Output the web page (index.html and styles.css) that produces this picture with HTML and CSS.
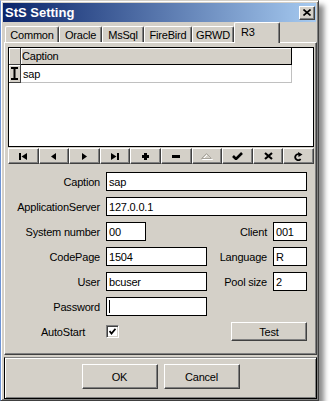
FILE: index.html
```html
<!DOCTYPE html>
<html lang="en">
<head>
    <meta charset="UTF-8">
    <meta name="viewport" content="width=device-width, initial-scale=1.0">
    <title>StS Setting</title>
    <link rel="stylesheet" href="styles.css">
</head>
<body>
    <div class="window">
        <div class="titlebar">
            <span class="title">StS Setting</span>
            <button class="close">
                <svg width="8" height="7" viewBox="0 0 8 7"><path d="M0.5 0.5L7.5 6.5M7.5 0.5L0.5 6.5" stroke="#000" stroke-width="1.6"/></svg>
            </button>
        </div>

        <div class="tabs">
            <div class="tab" style="width:54px">Common</div>
            <div class="tab" style="width:43px">Oracle</div>
            <div class="tab" style="width:42px">MsSql</div>
            <div class="tab" style="width:48px">FireBird</div>
            <div class="tab" style="width:42px">GRWD</div>
            <div class="tab active" style="width:46px">R3</div>
        </div>

        <div class="sheet">
            <!-- dataset grid -->
            <div class="grid">
                <div class="grid-head">
                    <div class="ind"></div>
                    <div class="col">Caption</div>
                </div>
                <div class="grid-row">
                    <div class="ind">
                        <svg width="7" height="13" viewBox="0 0 7 13"><rect x="0" y="0" width="7" height="2"/><rect x="0" y="11" width="7" height="2"/><rect x="2.5" y="0" width="2" height="13"/></svg>
                    </div>
                    <div class="cell">sap</div>
                </div>
            </div>

            <!-- navigator -->
            <div class="nav">
                <button><svg width="8" height="7" viewBox="0 0 8 7"><rect x="0" y="0" width="2" height="7"/><polygon points="2.5,3.5 8,0 8,7"/></svg></button>
                <button><svg width="5" height="7" viewBox="0 0 5 7"><polygon points="0,3.5 5,0 5,7"/></svg></button>
                <button><svg width="5" height="7" viewBox="0 0 5 7"><polygon points="0,0 5,3.5 0,7"/></svg></button>
                <button><svg width="8" height="7" viewBox="0 0 8 7"><polygon points="0,0 5.5,3.5 0,7"/><rect x="6" y="0" width="2" height="7"/></svg></button>
                <button><svg width="7" height="7" viewBox="0 0 7 7"><rect x="0" y="2" width="7" height="3"/><rect x="2" y="0" width="3" height="7"/></svg></button>
                <button><svg width="8" height="3" viewBox="0 0 8 3"><rect x="0" y="0" width="8" height="3"/></svg></button>
                <button><svg width="12" height="7" viewBox="0 0 12 7"><polygon points="1.5,6.5 6.5,1.5 11.5,6.5" fill="none" stroke="#fff"/><polygon points="0.5,5.5 5.5,0.5 10.5,5.5" fill="none" stroke="#a8a49c"/></svg></button>
                <button><svg width="11" height="8" viewBox="0 0 11 8"><polyline points="1,4 4,7 10,1" fill="none" stroke="#000" stroke-width="2.6"/></svg></button>
                <button><svg width="9" height="8" viewBox="0 0 9 8"><path d="M1 1L8 7M8 1L1 7" stroke="#000" stroke-width="2.2"/></svg></button>
                <button><svg width="9" height="9" viewBox="0 0 9 9"><path d="M4.8 2.2A3 3 0 1 0 6.6 7" fill="none" stroke="#000" stroke-width="1.8"/><polygon points="4,0 8.5,2.5 4.5,5"/></svg></button>
            </div>

            <div class="form">
                <div class="row">
                    <span class="label">Caption</span>
                    <div class="edit wide">sap</div>
                </div>
                <div class="row">
                    <span class="label">ApplicationServer</span>
                    <div class="edit wide">127.0.0.1</div>
                </div>
                <div class="row">
                    <span class="label">System number</span>
                    <div class="edit short">00</div>
                    <div class="side">
                        <span class="label">Client</span>
                        <div class="edit tiny">001</div>
                    </div>
                </div>
                <div class="row">
                    <span class="label">CodePage</span>
                    <div class="edit mid">1504</div>
                    <div class="side">
                        <span class="label">Language</span>
                        <div class="edit tiny">R</div>
                    </div>
                </div>
                <div class="row">
                    <span class="label">User</span>
                    <div class="edit mid">bcuser</div>
                    <div class="side">
                        <span class="label">Pool size</span>
                        <div class="edit tiny">2</div>
                    </div>
                </div>
                <div class="row">
                    <span class="label">Password</span>
                    <div class="edit mid"><span class="caret"></span></div>
                </div>
                <div class="row">
                    <span class="label auto-label">AutoStart</span>
                    <div class="checkbox">
                        <svg width="7" height="7" viewBox="0 0 7 7"><polyline points="0.5,3 2.5,5.5 6.5,0.8" fill="none" stroke="#000" stroke-width="1.8"/></svg>
                    </div>
                    <button class="btn test">Test</button>
                </div>
            </div>
        </div>

        <div class="footer">
            <button class="btn">OK</button>
            <button class="btn">Cancel</button>
        </div>
    </div>
</body>
</html>
```

FILE: styles.css
```css
body {
    margin: 0;
    background: #fff;
    font-family: "Liberation Sans", Arial, sans-serif;
    font-size: 11px;
    letter-spacing: -0.2px;
    color: #000;
}
.window {
    width: 319px;
    box-sizing: border-box;
    background: #d4d0c8;
    border: 1px solid;
    border-color: #d4d0c8 #404040 #404040 #6e94d6;
    box-shadow: inset 1px 1px #fff, inset -1px -1px #808080, 5px 5px 5px rgba(0, 0, 0, 0.45);
    padding: 2px 2px 1px 2px;
}
.titlebar {
    height: 19px;
    display: flex;
    align-items: center;
    justify-content: space-between;
    padding: 0 1px 0 2px;
    background: linear-gradient(to right, #0a246a, #a6caf0);
}
.title {
    color: #fff;
    font-weight: bold;
    font-size: 13px;
    letter-spacing: 0;
}
.close {
    width: 16px;
    height: 14px;
    padding: 0;
    display: flex;
    align-items: center;
    justify-content: center;
    background: #d4d0c8;
    border: 1px solid;
    border-color: #fff #404040 #404040 #fff;
    box-shadow: inset -1px -1px #808080;
}

/* tabs */
.tabs {
    display: flex;
    align-items: flex-end;
    height: 20px;
    margin: 0 -1px 0 1px;
    padding-left: 1px;
}
.tab {
    height: 16px;
    box-sizing: border-box;
    border: 1px solid;
    border-color: #fff #404040 transparent #fff;
    border-bottom: none;
    border-radius: 2px 2px 0 0;
    box-shadow: inset -1px 0 #808080;
    display: flex;
    align-items: center;
    justify-content: center;
}
.tab.active {
    height: 21px;
    margin-bottom: -1px;
    justify-content: flex-start;
    padding-left: 6px;
    padding-bottom: 2px;
    background: #d4d0c8;
    position: relative;
    z-index: 1;
}
.sheet {
    height: 313px;
    box-sizing: border-box;
    margin: 0 -1px 0 1px;
    border: 1px solid;
    border-color: #fff #404040 #404040 #fff;
    box-shadow: inset -1px -1px #808080;
    padding: 4px 2px 0 3px;
}

/* grid */
.grid {
    height: 100px;
    box-sizing: border-box;
    border: 1px solid #000;
    background: #fff;
}
.grid-head, .grid-row {
    display: flex;
}
.grid-head {
    height: 17px;
}
.grid-row {
    height: 18px;
}
.ind {
    width: 12px;
    box-sizing: border-box;
    background: #d4d0c8;
    border-right: 1px solid #404040;
    border-bottom: 1px solid #404040;
    box-shadow: inset 1px 1px #fff;
    display: flex;
    align-items: center;
    justify-content: center;
}
.grid-head .col {
    width: 271px;
    box-sizing: border-box;
    background: #d4d0c8;
    border-right: 1px solid #000;
    border-bottom: 1px solid #000;
    box-shadow: inset 1px 1px #fff;
    padding-left: 1px;
    display: flex;
    align-items: center;
}
.cell {
    width: 271px;
    box-sizing: border-box;
    border-right: 1px solid #c0c0c0;
    border-bottom: 1px solid #c0c0c0;
    padding-left: 2px;
    display: flex;
    align-items: center;
}

/* navigator */
.nav {
    display: flex;
    height: 16px;
    margin-top: 1px;
}
.nav button {
    flex: 1;
    padding: 0;
    background: #d4d0c8;
    border: 1px solid;
    border-color: #fff #404040 #404040 #fff;
    box-shadow: inset -1px -1px #808080;
    display: flex;
    align-items: center;
    justify-content: center;
}

/* edits */
.form {
    margin-top: 8px;
    display: flex;
    flex-direction: column;
    gap: 6px;
}
.row {
    width: 299px;
    height: 19px;
    display: flex;
    align-items: center;
}
.label {
    width: 92px;
    margin-right: 6px;
    text-align: right;
}
.auto-label {
    box-sizing: border-box;
    padding-right: 15px;
}
.edit {
    height: 19px;
    box-sizing: border-box;
    border: 1px solid #000;
    background: #fff;
    padding-left: 2px;
    display: flex;
    align-items: center;
}
.edit.wide {
    width: 201px;
}
.edit.short {
    width: 40px;
}
.edit.mid {
    width: 101px;
}
.edit.tiny {
    width: 34px;
}
.side {
    margin-left: auto;
    display: flex;
    align-items: center;
}
.side .label {
    width: auto;
}
.caret {
    width: 1px;
    height: 13px;
    background: #000;
}
.checkbox {
    width: 13px;
    height: 13px;
    box-sizing: border-box;
    background: #fff;
    border: 1px solid;
    border-color: #808080 #fff #fff #808080;
    box-shadow: inset 1px 1px #404040, inset -1px -1px #d4d0c8;
    display: flex;
    align-items: center;
    justify-content: center;
}
.btn {
    width: 76px;
    height: 25px;
    padding: 0;
    font-family: inherit;
    font-size: 11px;
    letter-spacing: inherit;
    color: #000;
    background: #d4d0c8;
    border: 1px solid;
    border-color: #fff #404040 #404040 #fff;
    box-shadow: inset -1px -1px #808080;
}
.btn.test {
    height: 19px;
    margin-left: auto;
}
.footer {
    height: 42px;
    box-sizing: border-box;
    margin: 2px -1px 0 1px;
    border: 1px solid #000;
    border-top-color: #808080;
    box-shadow: inset 1px 1px #fff, inset -1px -1px #808080;
    padding-top: 6px;
    display: flex;
    justify-content: center;
    gap: 6px;
}
```
